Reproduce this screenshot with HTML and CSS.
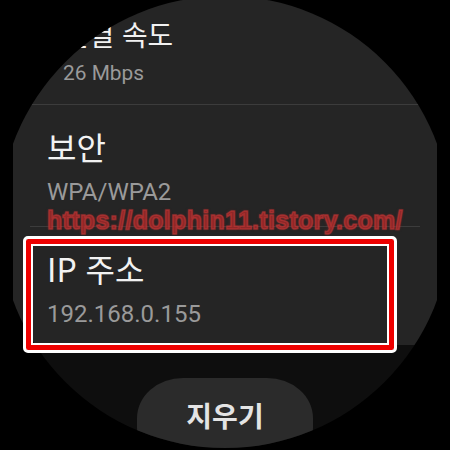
FILE: index.html
```html
<!DOCTYPE html>
<html lang="ko">
  <head>
    <meta charset="UTF-8" />
    <meta name="viewport" content="width=device-width, initial-scale=1.0" />
    <title>Wi-Fi 정보</title>
    <link rel="stylesheet" href="styles.css">
  </head>
  <body>
    <div id="screen">
      <div class="list">
        <div class="list-inner">
          <div class="item item-edge">
            <div class="item-body">
              <div class="item-title">연결 속도</div>
              <div class="item-value">26 Mbps</div>
            </div>
          </div>
          <div class="item">
            <div class="item-body">
              <div class="item-title">보안</div>
              <div class="item-value">WPA/WPA2</div>
            </div>
          </div>
          <div class="item">
            <div class="item-body">
              <div class="item-title">IP 주소</div>
              <div class="item-value">192.168.0.155</div>
            </div>
          </div>
        </div>
      </div>
      <div class="footer">
        <button class="clear-btn">지우기</button>
      </div>
    </div>

    <!-- annotations laid over the screenshot -->
    <div class="watermark">https://dolphin11.tistory.com/</div>
    <div class="highlight"></div>
  </body>
</html>
```

FILE: styles.css
```css
* {
  padding: 0;
  margin: 0;
  box-sizing: border-box;
  font-family: "Noto Sans CJK KR", "Noto Sans", sans-serif;
}
body {
  position: relative;
  background-color: #000;
  width: 450px;
  height: 450px;
  overflow: hidden;
}
#screen {
  width: 450px;
  height: 450px;
  overflow: hidden;
  clip-path: circle(226px at 225px 222px);
  background: linear-gradient(to bottom, transparent 345px, #0e0e0e 345px);
}
.list {
  margin: 0 13px;
  height: 345px;
  overflow: hidden;
  background-color: #252525;
}
.list-inner {
  margin-top: -17px;
}
.item {
  height: 122px;
  margin: 0 17px;
  padding: 20px 17px 0;
  border-bottom: 1px solid #3c3c3c;
}
/* item scrolled to the rim shrinks a little */
.item-edge .item-body {
  margin-top: 4px;
  transform: scale(0.87);
  transform-origin: 123px 75%;
}
.item-title {
  color: #f2f2f2;
  font-size: 32px;
  line-height: 42px;
}
.item-value {
  color: #9a9a9a;
  font-family: Roboto, "Noto Sans CJK KR", sans-serif;
  font-size: 24px;
  line-height: 34px;
  margin-top: 8px;
}
.footer {
  height: 105px;
}
.clear-btn {
  display: block;
  width: 176px;
  height: 90px;
  margin: 33px auto 0 auto;
  padding-bottom: 17px;
  border: none;
  border-radius: 46px / 40px;
  background-color: #2b2b2b;
  color: #e4e4e4;
  font-size: 28px;
  font-weight: bold;
}
.watermark {
  position: absolute;
  left: 47px;
  top: 206px;
  font-family: "Liberation Sans", Arial, sans-serif;
  font-weight: bold;
  font-size: 25px;
  letter-spacing: 0.3px;
  color: rgba(160, 40, 40, 0.75);
  -webkit-text-stroke: 1.5px rgba(195, 55, 55, 0.6);
  text-shadow: 0 0 3px rgba(170, 40, 40, 0.6);
}
.highlight {
  position: absolute;
  left: 23px;
  top: 236px;
  width: 374px;
  height: 117px;
  border: 3px solid #fff;
  border-radius: 5px;
  box-shadow: inset 0 0 0 5px #ee0000, inset 0 0 0 7px #fff;
}
```
